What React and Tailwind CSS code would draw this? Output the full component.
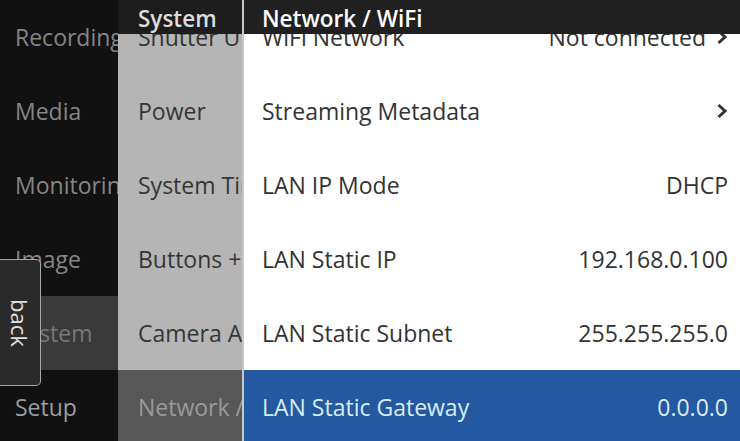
import React from 'react';

const font = { fontFamily: '"Open Sans", "Noto Sans", sans-serif' };

const mainItems = ['Recording', 'Media', 'Monitoring', 'Image', 'System', 'Setup'];
const systemItems = ['Shutter Units', 'Power', 'System Time', 'Buttons + Keys', 'Camera Admin', 'Network / WiFi'];
const netItems = [
  { label: 'WiFi Network', value: 'Not connected', chevron: true },
  { label: 'Streaming Metadata', value: '', chevron: true },
  { label: 'LAN IP Mode', value: 'DHCP' },
  { label: 'LAN Static IP', value: '192.168.0.100' },
  { label: 'LAN Static Subnet', value: '255.255.255.0' },
  { label: 'LAN Static Gateway', value: '0.0.0.0' },
];

function Chevron() {
  return (
    <svg width="12" height="18" viewBox="0 0 12 18" className="ml-[10px]">
      <path d="M2.5 3 L9 9 L2.5 15" fill="none" stroke="currentColor" strokeWidth="3" />
    </svg>
  );
}

export default function App() {
  return (
    <div className="relative w-[740px] h-[441px] overflow-hidden flex bg-[#111]" style={font}>
      {/* main menu */}
      <div className="w-[118px] shrink-0 flex flex-col bg-[#111]">
        {mainItems.map((m, i) => (
          <div
            key={m}
            className={`h-[74px] shrink-0 flex items-center pl-[15px] text-[23px] whitespace-nowrap overflow-hidden ${
              i === 4 ? 'bg-[#3a3a3a] text-[#767676]' : i === 5 ? 'text-[#9c9c9c]' : 'text-[#858585]'
            }`}
          >
            {m}
          </div>
        ))}
      </div>

      {/* system submenu */}
      <div className="relative w-[124px] shrink-0 flex flex-col bg-[#b5b5b5]">
        {systemItems.map((s, i) => (
          <div
            key={s}
            className={`h-[74px] shrink-0 flex items-center pl-[20px] text-[23px] whitespace-nowrap overflow-hidden ${
              i === 5 ? 'bg-[#575757] text-[#9a9a9a]' : 'text-[#353535]'
            }`}
          >
            {s}
          </div>
        ))}
        <div className="absolute top-0 left-0 right-0 h-[34px] bg-[#1d1d1d] flex items-center pl-[20px] pt-[3px] text-[22.5px] font-semibold text-[#dcdcdc]">
          System
        </div>
      </div>

      {/* network page */}
      <div className="relative flex-1 flex flex-col bg-white border-l-2 border-[#c8c8c8]">
        {netItems.map((n, i) => (
          <div
            key={n.label}
            className={`h-[74px] shrink-0 flex items-center justify-between pl-[18px] pr-[12px] text-[23px] whitespace-nowrap ${
              i === 5 ? 'bg-[#2459a1] text-[#d8ecfa]' : 'text-[#333]'
            }`}
          >
            <span>{n.label}</span>
            <span className="flex items-center">
              {n.value}
              {n.chevron && <Chevron />}
            </span>
          </div>
        ))}
        <div className="absolute top-0 left-0 right-0 h-[34px] bg-[#202020] flex items-center pl-[18px] pt-[3px] text-[22.5px] font-semibold text-white">
          Network / WiFi
        </div>
      </div>

      {/* back tab */}
      <div className="absolute left-0 top-[259px] w-[41px] h-[127px] bg-[#2a2a2a] border border-l-0 border-[#a8a8a8] rounded-r-[5px] flex items-center justify-center">
        <span className="text-[22px] text-[#e0e0e0] [writing-mode:vertical-rl] leading-none">back</span>
      </div>
    </div>
  );
}
